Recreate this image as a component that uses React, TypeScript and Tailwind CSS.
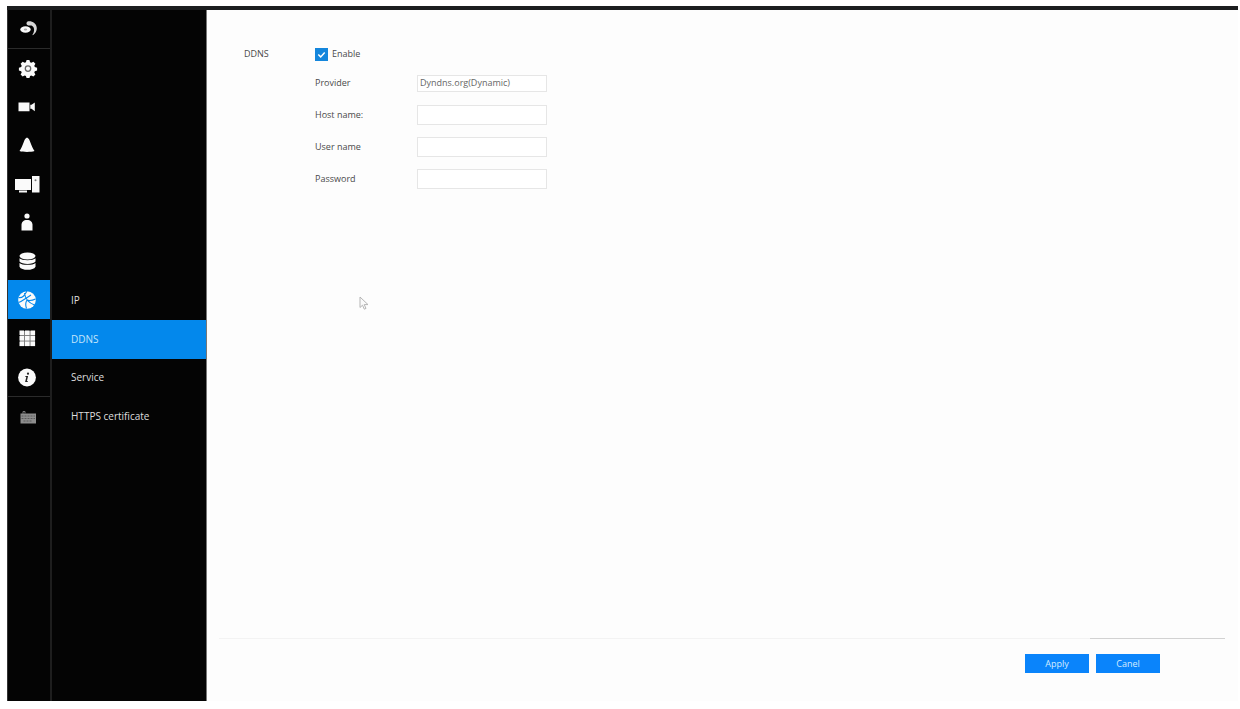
import { useState } from 'react'
import type { ReactNode } from 'react'

type Section = 'ip' | 'ddns' | 'service' | 'https'

const SUBMENU: { id: Section; label: string }[] = [
  { id: 'ip', label: 'IP' },
  { id: 'ddns', label: 'DDNS' },
  { id: 'service', label: 'Service' },
  { id: 'https', label: 'HTTPS certificate' },
]

function Icon({ children }: { children: ReactNode }) {
  return (
    <svg width="26" height="20" viewBox="0 0 26 20" fill="#fafafa" aria-hidden="true">
      {children}
    </svg>
  )
}

const LiveIcon = () => (
  <Icon>
    <ellipse cx="11.5" cy="10.5" rx="5.2" ry="3.2" />
    <ellipse cx="11.5" cy="10.5" rx="1.7" ry="0.9" fill="#aaa" />
    <path d="M13.500 2.500C17.500 1.500 22.500 4 22.800 9c.1 2.800-1.300 5.300-3.600 7-.5.300-1 .2-.6-.4 1.600-2.600 2-5.200.9-7.400-.9-1.300-1.800-1.800-3.300-1.700-2 .2-3.500-.3-3.700-1.700-.1-1 .3-1.900 1-2.300z" fill="#d8d8d8" />
  </Icon>
)

const GearIcon = () => (
  <Icon>
    <g transform="translate(1 0)">
      <path d="M11.600 2h2.800l.7 2.300 1.200.5 2.100-1.100 2 2-1.100 2.100.5 1.200 2.300.7v2.800l-2.300.7-.5 1.200 1.100 2.100-2 2-2.100-1.100-1.200.5-.7 2.200h-2.800l-.7-2.200-1.200-.5-2.100 1.100-2-2 1.100-2.100-.5-1.200-2.300-.7V9.700l2.300-.7.5-1.200-1.100-2.100 2-2 2.100 1.100 1.200-.5z" />
      <circle cx="13" cy="10.600" r="2.700" fill="none" stroke="#666" strokeWidth="1.300" />
    </g>
  </Icon>
)

const CameraIcon = () => (
  <Icon>
    <path d="M4.500 5.500h11v8.700h-11zM16.300 7.800h1.200L20.800 5.500v8.800l-3.300-2.500h-1.200z" />
  </Icon>
)

const AlarmIcon = () => (
  <Icon>
    <path d="M13 2.500c1.600.6 2.600 2.600 3.600 5.400 1.100 3 2 5.200 3.900 8.100-3.500 1.200-11.500 1.200-15 0 1.900-2.900 2.800-5.100 3.900-8.100 1-2.800 2-4.800 3.600-5.400z" />
  </Icon>
)

const DeviceIcon = () => (
  <Icon>
    <path d="M1 5h16v11H1zM5 16.500h8v2H5z" />
    <path d="M18 2h7.500v16.500H18z" />
    <circle cx="21.500" cy="6.200" r="1" fill="#777" />
  </Icon>
)

const UserIcon = () => (
  <Icon>
    <circle cx="13" cy="4" r="2.600" />
    <path d="M7.500 18.500v-5.500c0-3 2-5 5.500-5s5.500 2 5.500 5v5.500z" />
  </Icon>
)

const StorageIcon = () => (
  <Icon>
    <ellipse cx="13.500" cy="5" rx="8" ry="3.500" />
    <path d="M5.500 7.300c2 2.600 14 2.600 16 0v3.200c-2 3.200-14 3.200-16 0zM5.500 11.900c2 2.600 14 2.600 16 0v3.800c-2 4.200-14 4.200-16 0z" />
  </Icon>
)

const NetworkIcon = () => (
  <Icon>
    <circle cx="13" cy="10" r="8.800" />
    <path
      d="M4.500 7.500c4 .8 6-2 8.500-6.500M4.500 12.500c4-1 6.500-4 12.500-7.500M10.500 3c.5 5 3.500 9.500 10 12M12.500 18.500c-1.500-4-1-6 .5-8.500M21.500 9c-4 2-6 2-9 1"
      fill="none"
      stroke="#0388ec"
      strokeWidth="1.100"
    />
  </Icon>
)

const GridIcon = () => (
  <Icon>
    <path d="M6 3h15v15H6z" fill="#777" />
    {[2.5, 8, 13.5].map(y =>
      [5.5, 11, 16.5].map(x => <rect key={`${x}-${y}`} x={x} y={y} width="4.600" height="4.600" />)
    )}
  </Icon>
)

const InfoIcon = () => (
  <Icon>
    <circle cx="13" cy="10.500" r="8.900" />
    <circle cx="14" cy="6.700" r="1.100" fill="#222" />
    <path d="M11.500 9h2.600l-1.200 5h1l-.3 1h-2.500l1.200-5h-1z" fill="#222" />
  </Icon>
)

const KeyboardIcon = () => (
  <Icon>
    <path d="M6.500 6.500h15.500v10H6.500z" fill="#8d8d8d" />
    <path d="M9 7V4.500h2V6.500" fill="none" stroke="#777" />
    <path d="M7.500 9h13.500M7.500 11.500h13.500M9.500 14h9" stroke="#5a5a5a" strokeDasharray="2 1" />
  </Icon>
)

const RAIL = [
  { label: 'System', icon: <GearIcon /> },
  { label: 'Camera', icon: <CameraIcon /> },
  { label: 'Alarm', icon: <AlarmIcon /> },
  { label: 'Devices', icon: <DeviceIcon /> },
  { label: 'Users', icon: <UserIcon /> },
  { label: 'Storage', icon: <StorageIcon /> },
  { label: 'Network', icon: <NetworkIcon /> },
  { label: 'Applications', icon: <GridIcon /> },
  { label: 'Information', icon: <InfoIcon /> },
]

const railButton = 'flex w-full items-center justify-center pr-1'
const field = 'w-full rounded-none border border-[#e6e6e6] bg-white px-0.5 text-[9px] text-[#666] outline-none'

export default function App() {
  const [section, setSection] = useState<Section>('ddns')
  const [railItem, setRailItem] = useState('Network')
  const [enabled, setEnabled] = useState(true)
  const [form, setForm] = useState({ host: '', user: '', password: '' })

  const reset = () => setForm({ host: '', user: '', password: '' })

  return (
    <div className="flex min-h-screen flex-col bg-white pt-1.5 pr-0.5 pb-2 pl-[7px] font-['Open_Sans','Noto_Sans',sans-serif]">
      <div className="h-1 bg-[#1c1e1f]" />
      <div className="flex flex-1">
        <nav aria-label="Main" className="flex w-[45px] shrink-0 flex-col border-r-2 border-l border-r-[#1e1e1e] border-l-[#333] bg-[#040404]">
          <button aria-label="Live view" className={`${railButton} h-[39px] border-b border-[#2b2b2b]`}>
            <LiveIcon />
          </button>
          <div className="grid h-[348px] auto-rows-fr border-b border-[#2b2b2b]">
            {RAIL.map(item => (
              <button
                key={item.label}
                aria-label={item.label}
                onClick={() => setRailItem(item.label)}
                className={`${railButton} ${item.label === railItem ? 'bg-[#0388ec]' : ''}`}
              >
                {item.icon}
              </button>
            ))}
          </div>
          <button aria-label="Keyboard" className={`${railButton} h-10`}>
            <KeyboardIcon />
          </button>
        </nav>

        <nav aria-label="Network" className="w-[155px] shrink-0 border-r border-[#777] bg-[#040404] pt-[271px]">
          <div className="grid h-[155px] auto-rows-fr">
            {SUBMENU.map(item => (
              <button
                key={item.id}
                onClick={() => setSection(item.id)}
                className={`px-[19px] text-left text-[10px] ${
                  item.id === section ? 'bg-[#0388ec] text-[#c5e5fb]' : 'text-[#dedede]'
                }`}
              >
                {item.label}
              </button>
            ))}
          </div>
        </nav>

        <main className="relative flex flex-1 flex-col bg-[#fdfdfd]">
          <form
            id="ddns"
            onSubmit={e => e.preventDefault()}
            className="flex flex-1 items-start pt-[34px] pl-[37px] text-[9px] text-[#4a4a4a]"
          >
            <h1 className="w-[71px] leading-5">DDNS</h1>
            <div className="flex flex-col">
              <label className="flex h-5 items-center gap-1">
                <span className="grid size-[13px] place-items-center bg-[#1486dc]">
                  <input
                    type="checkbox"
                    checked={enabled}
                    onChange={e => setEnabled(e.target.checked)}
                    className="peer col-start-1 row-start-1 size-[13px] appearance-none"
                  />
                  <svg viewBox="0 0 12 12" className="invisible pointer-events-none col-start-1 row-start-1 size-[11px] peer-checked:visible">
                    <path d="M2.500 6l2.600 2.600L9.500 3.800" fill="none" stroke="#fff" strokeWidth="1.600" />
                  </svg>
                </span>
                Enable
              </label>
              <div className="mt-[9px] grid auto-rows-[20px] grid-cols-[102px_130px] items-center gap-y-3">
                <label htmlFor="provider">Provider</label>
                <select id="provider" className={`${field} h-[17px] appearance-none leading-[14px]`}>
                  <option>Dyndns.org(Dynamic)</option>
                </select>
                <label htmlFor="host">Host name:</label>
                <input
                  id="host"
                  value={form.host}
                  onChange={e => setForm({ ...form, host: e.target.value })}
                  className={`${field} h-5`}
                />
                <label htmlFor="user">User name</label>
                <input
                  id="user"
                  value={form.user}
                  onChange={e => setForm({ ...form, user: e.target.value })}
                  className={`${field} h-5`}
                />
                <label htmlFor="password">Password</label>
                <input
                  id="password"
                  type="password"
                  value={form.password}
                  onChange={e => setForm({ ...form, password: e.target.value })}
                  className={`${field} h-5`}
                />
              </div>
            </div>
          </form>

          <footer className="pr-[13px] pl-3 text-[9px]">
            <div className="flex h-px">
              <div className="flex-1 bg-[#f3f3f3]" />
              <div className="w-[135px] bg-[#d2d2d2]" />
            </div>
            <div className="flex justify-end gap-[7px] pt-[15px] pr-[65px] pb-7">
              <button type="submit" form="ddns" className="h-[19px] w-16 bg-[#0a84fb] text-[#d5ecff]">
                Apply
              </button>
              <button type="button" onClick={reset} className="h-[19px] w-16 bg-[#0a84fb] text-[#d5ecff]">
                Canel
              </button>
            </div>
          </footer>

          {/* mouse pointer */}
          <svg width="10" height="15" viewBox="0 0 10 15" aria-hidden="true" className="pointer-events-none absolute top-[286px] left-[152px]">
            <path d="M1 1v10.500l2.500-2.300 1.800 4 1.700-.8-1.800-3.800H9z" fill="#fafafa" stroke="#b5b5b5" strokeWidth="1" />
          </svg>
        </main>
      </div>
    </div>
  )
}
